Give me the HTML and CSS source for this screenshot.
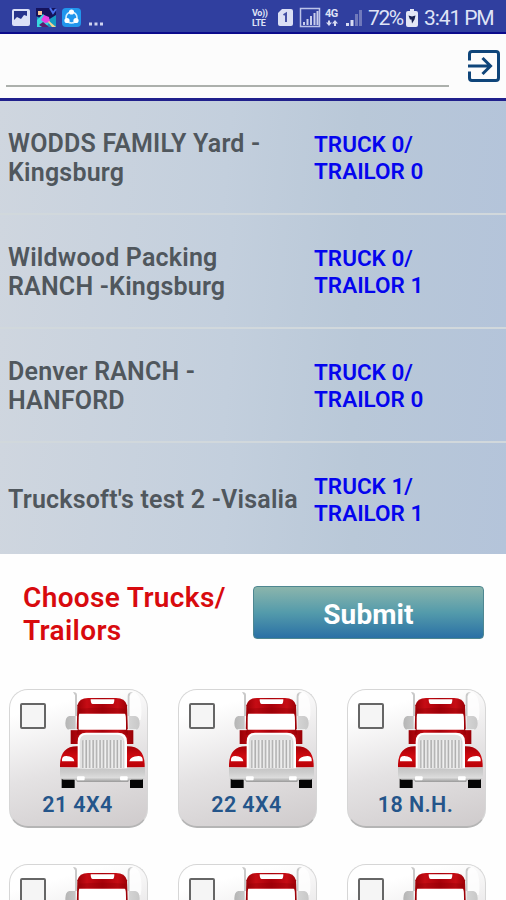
FILE: index.html
```
<!DOCTYPE html>
<html lang="en">
<head>
	<meta charset="UTF-8">
	<title>Choose Trucks/Trailors</title>
	<link rel="stylesheet" href="styles.css">
</head>
<body>
	<svg class="defs" width="0" height="0">
		<defs>
			<linearGradient id="red" x1="0" x2="1">
				<stop offset="0" stop-color="#980006"/>
				<stop offset=".2" stop-color="#c60c14"/>
				<stop offset=".5" stop-color="#a80009"/>
				<stop offset=".8" stop-color="#c60c14"/>
				<stop offset="1" stop-color="#980006"/>
			</linearGradient>
			<linearGradient id="fender" x1="0" y1="0" x2="0" y2="1">
				<stop offset="0" stop-color="#a60007"/>
				<stop offset=".5" stop-color="#d00a10"/>
				<stop offset="1" stop-color="#b80007"/>
			</linearGradient>
			<linearGradient id="chrome" x1="0" y1="0" x2="0" y2="1">
				<stop offset="0" stop-color="#c4c4c4"/>
				<stop offset=".35" stop-color="#cdcdcd"/>
				<stop offset=".7" stop-color="#dcdcdc"/>
				<stop offset="1" stop-color="#999"/>
			</linearGradient>
			<linearGradient id="mirror" x1="0" x2="1">
				<stop offset="0" stop-color="#b5b5b5"/>
				<stop offset=".5" stop-color="#f2f2f2"/>
				<stop offset="1" stop-color="#c8c8c8"/>
			</linearGradient>
			<pattern id="bars" x="71" y="0" width="10.4" height="10" patternUnits="userSpaceOnUse">
				<rect width="10.4" height="10" fill="#f0f0f0"/>
				<rect x="1" width="4.6" height="10" fill="#acacac"/>
			</pattern>
		</defs>
		<symbol id="truck" viewBox="0 0 270 300">
			<!-- stacks -->
			<path d="M45 6q12 0 12 10v62h-6V16zM225 6q-16 0-16 12v60h6V18z" fill="#c9c9c9"/>
			<path d="M215 90V20q0-13 11-13 14 3 20 20 8 35 2 63z" fill="#fff" opacity=".75"/>
			<!-- mirrors -->
			<path d="M53 78H34q-12 3-12 22t13 20h18zM212 78h20q13 3 13 22t-13 20h-20z" fill="url(#mirror)"/>
			<!-- cab -->
			<path d="M38 120H226V162H38z" fill="url(#red)"/>
			<path d="M58 46Q64 24 90 24h84q27 0 33 22l3 88H56z" fill="url(#red)"/>
			<path d="M98 28h71q0 14-5 14h-60q-6 0-6-14z" fill="#fff"/>
			<path d="M62 69h141v-13q-70-5-141 0z" fill="#8d0006" opacity=".35"/>
			<path d="M64 71h136q4 0 4 25v23H62V96q0-25 2-25z" fill="#fff"/>
			<path d="M32 119h27M208 119h27" stroke="#f4f4f4" stroke-width="3"/>
			<!-- fenders -->
			<path d="M6 232q-2-66 56-63v63zM260 232q2-66-56-63v63z" fill="url(#fender)"/>
			<path d="M12 214q-2-16 13-16 22 1 24 16zM254 214q2-16-13-16-24 1-27 16z" fill="#fff"/>
			<!-- grille -->
			<path d="M59 236V155q0-27 25-27h96q27 0 27 27v81z" fill="#fff"/>
			<path d="M65 234V158q0-24 20-24h91q24 0 24 24v76z" fill="#e2e2e2"/>
			<path d="M71 152q2-2 6-2h114q6 0 6 4v80H71z" fill="url(#bars)"/>
			<!-- wheels -->
			<path d="M11 258h39v36H11zM216 258h39v36h-39z" fill="#050505"/>
			<!-- bumper -->
			<path d="M6 232q60 6 127 3 65 3 128-3v27q0 10-10 10h-31q-6 0-10 7H58q-4-7-10-7H17q-11 0-11-10z" fill="url(#chrome)"/>
			<rect x="57" y="259" width="23" height="12" rx="3" fill="#fff"/>
			<rect x="186" y="259" width="23" height="12" rx="3" fill="#fff"/>
		</symbol>
	</svg>

	<div class="status">
		<svg class="ic-left" width="106" height="34" viewBox="0 0 106 34">
			<!-- gallery -->
			<rect x="12" y="9" width="18" height="17" rx="2" fill="#dbe0f6"/>
			<path d="M14 11h13v5l-3-1-3 4-4-2-3 3z" fill="#27338c"/>
			<!-- game -->
			<rect x="37" y="8" width="19" height="19" fill="#169bc4"/>
			<path d="M36 8h20v7l-8 5-8-2-4-2z" fill="#15135c"/>
			<path d="M38 11h4v4h-4z" fill="#f5c596"/>
			<path d="M37 20l6-6 3 3 3 6-3 4h-9z" fill="#37d8df"/>
			<path d="M44 15l5 2 1 5-5 1-4-3z" fill="#e83fe3"/>
			<path d="M43 22l6 5h-7l-3-2z" fill="#5c1b6d"/>
			<path d="M49 21l7 6h-4l-4-5z" fill="#f4d391"/>
			<path d="M50 8l3 5 3-4" stroke="#4870ec" stroke-width="2" fill="none"/>
			<!-- share -->
			<rect x="62" y="8" width="19" height="19" rx="4" fill="#2196ed"/>
			<circle cx="71.500" cy="17.500" r="5.500" fill="none" stroke="#d9f1ff" stroke-width="1.600"/>
			<circle cx="71.500" cy="12" r="2.600" fill="#fff"/>
			<circle cx="67" cy="20.500" r="2.600" fill="#fff"/>
			<circle cx="76" cy="20.500" r="2.600" fill="#fff"/>
			<path d="M89 22.500h3v3h-3zM94.500 22.500h3v3h-3zM100 22.500h3v3h-3z" fill="#cfd4ef"/>
		</svg>
		<div class="status-right">
			<div class="tiny">Vo))<br>LTE</div>
			<svg class="ic-signal" width="94" height="34" viewBox="0 0 94 34">
				<path d="M6 9h9q2 0 2 2v13q0 2-2 2H4q-2 0-2-2V13z" fill="#dbdff4"/>
				<path d="M7.500 15l2.500-1.500V22" stroke="#4450a5" stroke-width="2" fill="none"/>
				<rect x="24.500" y="8.500" width="19" height="18" fill="none" stroke="#bcc3e9" stroke-width="1.500"/>
				<path d="M27 25v-3h2v3zM30.500 25v-6h2v6zM34 25v-9h2v9zM37.500 25V13h2v12zM40.500 25V11h2v14z" fill="#c8cdeb"/>
				<path d="M52 20.500l2 0v2h2l-3 3.500-3-3.500h2zM58 26v-2.500h-2l3-3.500 3 3.500h-2V26z" fill="#d7dbf2"/>
				<path d="M70 26v-3h3v3zM74.500 26v-6h3v6z" fill="#d7dbf2"/>
				<path d="M79 26V14h3v12zM83 26V10h3v16z" fill="#7079bb"/>
			</svg>
			<span class="net">4G</span>
			<span class="percent">72%</span>
			<svg class="ic-battery" width="12" height="18" viewBox="0 0 12 18">
				<path d="M4 0h4v2h2q2 0 2 2v12q0 2-2 2H2q-2 0-2-2V4q0-2 2-2h2z" fill="#e3e6f6"/>
				<path d="M2.500 6.500l3.500 1 3.500-1-1 4-2.500 4-.5-4H4z" fill="#172052"/>
			</svg>
			<span class="time">3:41 PM</span>
		</div>
	</div>

	<div class="search">
		<div class="field"></div>
		<svg class="logout" width="32" height="32" viewBox="0 0 32 32" fill="none" stroke="#0f457a" stroke-width="3">
			<path d="M1.500 10.500V4q0-2.500 2.500-2.500h24q2.500 0 2.500 2.500v24q0 2.500-2.500 2.500H4q-2.500 0-2.500-2.500v-6.500"/>
			<path d="M0 16h22M14.500 8l8 8-8 8"/>
		</svg>
	</div>

	<ul class="places">
		<li><div class="name">WODDS FAMILY Yard -<br>Kingsburg</div><div class="count">TRUCK 0/<br>TRAILOR 0</div></li>
		<li><div class="name">Wildwood Packing<br>RANCH -Kingsburg</div><div class="count">TRUCK 0/<br>TRAILOR 1</div></li>
		<li><div class="name">Denver RANCH -<br>HANFORD</div><div class="count">TRUCK 0/<br>TRAILOR 0</div></li>
		<li><div class="name">Trucksoft's test 2 -Visalia</div><div class="count">TRUCK 1/<br>TRAILOR 1</div></li>
	</ul>

	<div class="choose">
		<div class="title">Choose Trucks/<br>Trailors</div>
		<button class="submit">Submit</button>
	</div>

	<div class="trucks">
		<div class="card"><div class="top"><i class="check"></i><svg width="90" height="100"><use href="#truck"/></svg></div><p>21 4X4</p></div>
		<div class="card"><div class="top"><i class="check"></i><svg width="90" height="100"><use href="#truck"/></svg></div><p>22 4X4</p></div>
		<div class="card"><div class="top"><i class="check"></i><svg width="90" height="100"><use href="#truck"/></svg></div><p>18 N.H.</p></div>
		<div class="card"><div class="top"><i class="check"></i><svg width="90" height="100"><use href="#truck"/></svg></div></div>
		<div class="card"><div class="top"><i class="check"></i><svg width="90" height="100"><use href="#truck"/></svg></div></div>
		<div class="card"><div class="top"><i class="check"></i><svg width="90" height="100"><use href="#truck"/></svg></div></div>
	</div>
</body>
</html>
```
FILE: styles.css
```
*{box-sizing:border-box;}
html,body{height:900px;overflow:hidden;}
body{margin:0;background:#fefefe;font-family:Roboto,"Liberation Sans",sans-serif;font-weight:600;}
ul,p{list-style:none;padding:0;margin:0;}
svg{display:block;flex:none;}
.defs{position:absolute;}

.status{display:flex;justify-content:space-between;height:34px;background:#303f9f;border-bottom:2px solid #0b0b8c;color:#dfe3f6;}
.status-right{display:flex;padding-left:1px;position:relative;width:255px;}
.tiny{width:24px;padding-top:8px;font-size:9px;line-height:10px;font-weight:700;letter-spacing:-.4px;}
.net{position:absolute;left:74px;top:8px;font-size:11px;line-height:12px;font-weight:700;letter-spacing:-.5px;}
.percent,.time{font-size:21px;line-height:36px;font-weight:400;white-space:nowrap;}
.percent{margin-left:-2px;width:38px;letter-spacing:-1.4px;}
.time{letter-spacing:-1.1px;}
.ic-battery{margin:9px 6px 0 0;}

.search{display:flex;justify-content:space-between;height:67px;padding:16px 6px 0;background:#fcfcfc;border-bottom:3px solid #20208c;}
.field{width:443px;height:37px;border-bottom:2px solid #acb0ac;}

.places li{display:flex;align-items:center;height:114px;padding:2px 8px 0;border-bottom:2px solid #d1d8dc;background:linear-gradient(95deg,#cfd6df 0%,#c3cfdd 45%,#b9c8d8 70%,#b4c4da 100%);}
.places li:last-child{height:111px;padding-top:3px;border-bottom:0;}
.name{width:306px;font-size:25px;line-height:29.500px;letter-spacing:.2px;color:#50575d;white-space:nowrap;}
.count{font-size:22.500px;line-height:27px;color:#0505ee;}

.choose{display:flex;justify-content:space-between;height:135px;padding:27px 22px 0 23px;}
.title{font-size:28px;line-height:33px;letter-spacing:.35px;color:#d80a0e;white-space:nowrap;}
.submit{width:231px;height:53px;margin-top:5px;padding:3px 0 0;border:1px solid #4e8791;border-radius:4px;background:linear-gradient(#8bb5ac,#549bab 50%,#2a70a5);color:#fff;font:700 28px Roboto,sans-serif;letter-spacing:.1px;}

.trucks{display:grid;grid-template-columns:repeat(3,139px);gap:36px 30px;padding-left:9px;}
.card{height:139px;border-radius:19px;background:linear-gradient(165deg,#fff 15%,#e4e2e3 55%,#cfcbcc);border:1px solid #d6d6d6;border-bottom:2px solid #b5b5b5;}
.top{display:flex;justify-content:space-between;height:103px;margin-right:-1px;padding:0 0 0 10px;}
.check{width:26px;height:26px;margin-top:13px;border:2px solid #666;border-radius:2px;background:#f5f5f5;}
.card p{padding-right:2px;text-align:center;font-size:21.500px;line-height:24px;letter-spacing:.4px;color:#24558a;}
```
